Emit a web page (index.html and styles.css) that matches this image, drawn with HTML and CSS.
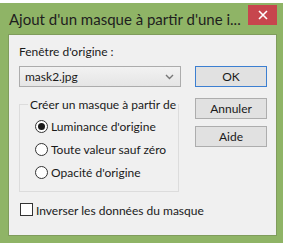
FILE: index.html
```html
<!DOCTYPE html>
<html lang="fr">
<head>
  <meta charset="UTF-8">
  <title>Ajout d'un masque</title>
  <link rel="stylesheet" href="styles.css">
</head>
<body>
  <div class="window">
    <div class="titlebar">
      <span class="title">Ajout d'un masque à partir d'une i...</span>
      <span class="close">
        <svg width="10" height="10" viewBox="0 0 10 10"><path d="M1 1L9 9M9 1L1 9" stroke="#fff" stroke-width="1.6"/></svg>
      </span>
    </div>
    <div class="client">
      <div class="left">
        <div class="label">Fenêtre d'origine :</div>
        <div class="select">
          <span>mask2.jpg</span>
          <svg width="9" height="6" viewBox="0 0 9 6"><path d="M1 1L4.5 4.5L8 1" stroke="#777" stroke-width="1.4" fill="none"/></svg>
        </div>
        <fieldset class="group">
          <legend>Créer un masque à partir de</legend>
          <div class="radio"><span class="dot checked"></span>Luminance d'origine</div>
          <div class="radio"><span class="dot"></span>Toute valeur sauf zéro</div>
          <div class="radio"><span class="dot"></span>Opacité d'origine</div>
        </fieldset>
      </div>
      <div class="buttons">
        <div class="btn default">OK</div>
        <div class="btn">Annuler</div>
        <div class="btn">Aide</div>
      </div>
      <div class="check"><span class="box"></span>Inverser les données du masque</div>
    </div>
  </div>
</body>
</html>
```

FILE: styles.css
```css
body {
  margin: 0;
  background-color: #fff;
  font-family: Lato, "Liberation Sans", sans-serif;
  font-size: 12px;
  color: #1a1a1a;
}
.window {
  width: 283px;
  height: 240px;
  margin-top: 3px;
  background-color: #8fb466;
  box-sizing: border-box;
  padding: 0 6px 7px 8px;
  display: flex;
  flex-direction: column;
}
.titlebar {
  height: 31px;
  flex-shrink: 0;
  display: flex;
  align-items: flex-start;
  justify-content: space-between;
}
.title {
  font-size: 15px;
  color: #1e1e1e;
  margin-top: 7px;
  margin-left: 1px;
  white-space: nowrap;
}
.close {
  width: 29px;
  height: 20px;
  margin-top: 2px;
  background-color: #c7464d;
  display: flex;
  align-items: center;
  justify-content: center;
}
.client {
  flex: 1;
  background-color: #f0f0f0;
  border: 1px solid #7f9c5c;
  display: grid;
  grid-template-columns: 172px 1fr;
  grid-template-rows: auto 1fr;
}
.left {
  padding: 10px 0 0 10px;
}
.label {
  height: 14px;
  line-height: 14px;
}
.select {
  margin-top: 7px;
  width: 162px;
  height: 21px;
  box-sizing: border-box;
  border: 1px solid #acacac;
  background: linear-gradient(#f2f2f2, #e5e5e5);
  display: flex;
  align-items: center;
  justify-content: space-between;
  padding: 0 6px 0 5px;
}
.group {
  margin: 10px 0 0 0;
  width: 160px;
  height: 95px;
  box-sizing: border-box;
  border: 1px solid #dcdcdc;
  padding: 3px 0 0 15px;
  white-space: nowrap;
}
.group legend {
  padding: 0 2px;
  margin-left: -7px;
}
.radio {
  display: flex;
  align-items: center;
  height: 23px;
  gap: 3px;
}
.dot {
  width: 11px;
  height: 11px;
  border: 1px solid #333;
  border-radius: 50%;
  background: #fff;
  display: flex;
  align-items: center;
  justify-content: center;
}
.dot.checked::after {
  content: "";
  width: 7px;
  height: 7px;
  border-radius: 50%;
  background: #1a1a1a;
}
.buttons {
  padding: 31px 0 0 14px;
  display: flex;
  flex-direction: column;
  gap: 7px;
}
.btn {
  width: 72px;
  height: 21px;
  box-sizing: border-box;
  border: 1px solid #adadad;
  background: #e1e1e1;
  display: flex;
  align-items: center;
  justify-content: center;
}
.btn.default {
  border-color: #3c7fd1;
  margin-bottom: 4px;
}
.check {
  grid-column: 1 / 3;
  display: flex;
  align-items: flex-start;
  gap: 3px;
  padding: 11px 0 0 11px;
}
.box {
  width: 11px;
  height: 11px;
  border: 1px solid #333;
  background: #fff;
}
```
